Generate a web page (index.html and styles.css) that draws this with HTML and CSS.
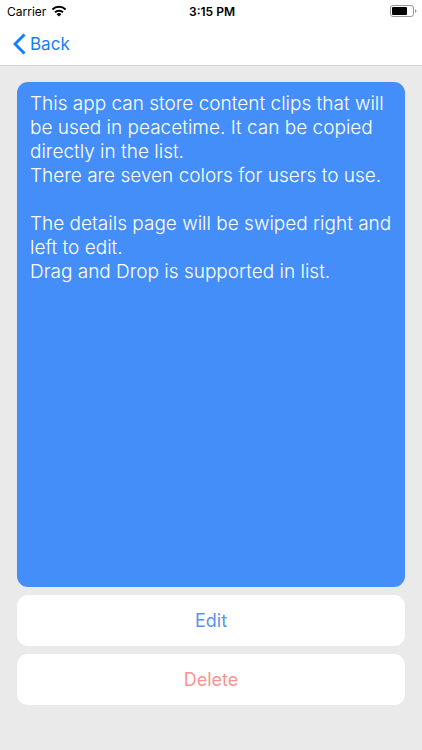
FILE: index.html
```html
<!DOCTYPE html>
<html lang="en">
<head>
    <meta charset="UTF-8">
    <meta name="viewport" content="width=device-width, initial-scale=1.0">
    <title>Clip</title>

    <link rel="stylesheet" href="styles.css">
</head>
<body>
    <header>
        <div class="status">
            <div class="carrier">
                <span>Carrier</span>
                <svg class="wifi" width="16" height="12" viewBox="0 0 16 12" aria-hidden="true">
                    <path d="M1.4 4.5a9.5 9.5 0 0 1 13.2 0M4 7.3a5.8 5.8 0 0 1 8 0" fill="none" stroke="#000" stroke-width="2"/>
                    <path d="M8 11.6L5.6 9.2a3.4 3.4 0 0 1 4.8 0z"/>
                </svg>
            </div>
            <div class="time">3:15 PM</div>
            <svg class="battery" width="27" height="12" viewBox="0 0 27 12" aria-hidden="true">
                <rect x="0.5" y="0.5" width="23" height="11" rx="2.5" fill="#fff" stroke="#999"/>
                <rect x="2" y="2" width="15" height="8" rx="1"/>
                <path d="M25 4v4c2-.8 2-3.200 0-4z" fill="#999"/>
            </svg>
        </div>
        <nav>
            <a href="#" class="back">
                <svg width="13" height="22" viewBox="0 0 13 22" aria-hidden="true">
                    <path d="M11.500 1.500L2 11l9.500 9.500" fill="none" stroke="#147efb" stroke-width="3"/>
                </svg>
                <span>Back</span>
            </a>
        </nav>
    </header>

    <main>
        <article class="clip">
            <p>This app can store content clips that will be used in peacetime. It can be copied directly in the list.<br>There are seven colors for users to use.</p>
            <p>The details page will be swiped right and left to edit.<br>Drag and Drop is supported in list.</p>
        </article>
        <button type="button" class="edit">Edit</button>
        <button type="button" class="delete">Delete</button>
    </main>
</body>
</html>
```

FILE: styles.css
```css
* {
    box-sizing: border-box;
}

body {
    margin: 0;
    min-height: 100vh;
    display: flex;
    flex-direction: column;
    background-color: #eaeaea;
    font-family: Inter, Roboto, "Liberation Sans", sans-serif;
}

header {
    background-color: white;
    border-bottom: 1px solid #d2d2d2;
}

.status {
    display: grid;
    grid-template-columns: 1fr auto 1fr;
    align-items: center;
    height: 22px;
    padding: 0 5px 0 7px;
    font-size: 12px;
}

.carrier {
    display: flex;
    align-items: center;
    gap: 5px;
}

.time {
    font-weight: 600;
}

.battery {
    justify-self: end;
}

nav {
    display: flex;
    align-items: center;
    height: 43px;
    padding: 0 13px;
}

.back {
    display: flex;
    align-items: center;
    gap: 4px;
    color: #147efb;
    font-size: 17px;
    text-decoration: none;
}

main {
    flex: 1;
    display: flex;
    flex-direction: column;
    gap: 8px;
    padding: 16px 17px 45px;
}

.clip {
    flex: 1;
    padding: 10px 8px 10px 13px;
    border-radius: 11px;
    background-color: #438ef9;
    color: white;
    font-size: 19px;
    font-weight: 300;
    line-height: 24px;
}

.clip p {
    margin: 0 0 24px;
}

button {
    height: 51px;
    border: none;
    border-radius: 11px;
    background-color: white;
    font-family: inherit;
    font-size: 18px;
}

.edit {
    color: #5b93ec;
}

.delete {
    color: #f79494;
}
```
